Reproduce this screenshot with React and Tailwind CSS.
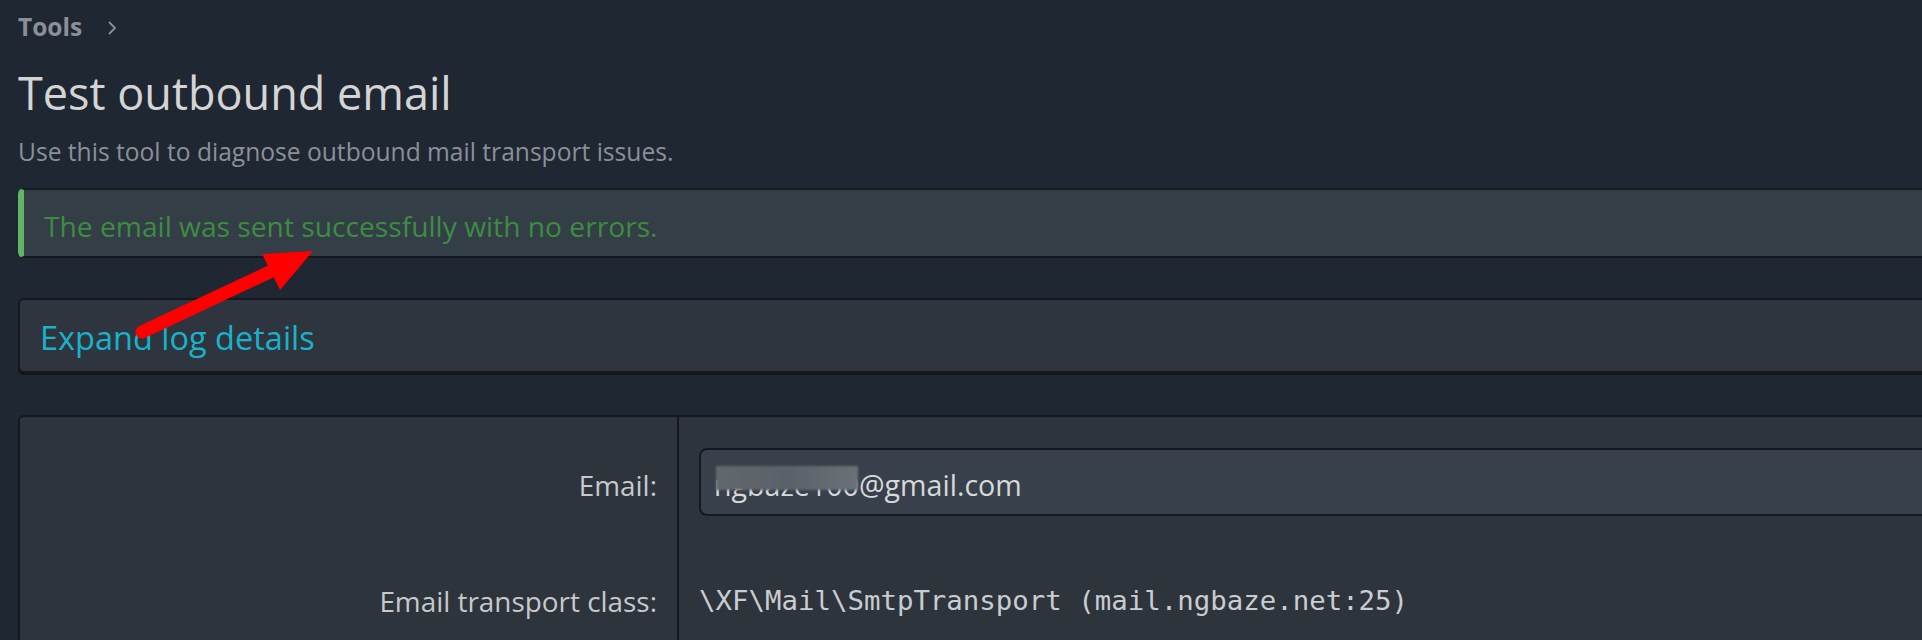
import React from "react";

export default function App() {
  return (
    <div className="relative w-[1922px] h-[640px] overflow-hidden bg-[#1f2733] font-['Open_Sans',sans-serif]">
      <div className="w-[2000px] pl-[18px]">
        {/* Breadcrumb */}
        <div className="pt-[12px] flex items-center gap-[24px] text-[#8c9096]">
          <span className="text-[24.5px] leading-[29px] font-bold">Tools</span>
          <svg width="12" height="16" viewBox="0 0 12 16" className="mt-[2px]">
            <path d="M3 2 L9 8 L3 14" fill="none" stroke="#8c9096" strokeWidth="1.8" />
          </svg>
        </div>

        {/* Title */}
        <h1 className="mt-[24px] text-[45px] leading-[56px] font-normal text-[#d4d4d4]">
          Test outbound email
        </h1>
        <p className="mt-[15px] text-[24.6px] leading-[32px] text-[#8b9097]">
          Use this tool to diagnose outbound mail transport issues.
        </p>

        {/* Success message */}
        <div className="mt-[20px] h-[70px] flex items-center rounded-[6px] border-2 border-[#15181d] border-l-[6px] border-l-[#62b564] bg-[#333e47] pl-[20px]">
          <span className="pt-[5px] text-[28.2px] leading-[38px] text-[#3d8c42]">
            The email was sent successfully with no errors.
          </span>
        </div>

        {/* Expand log */}
        <div className="mt-[40px] h-[75px] flex items-center rounded-[6px] border-2 border-[#15181d] bg-[#2f353e] pl-[20px] shadow-[0_2px_0_0_#131519]">
          <span className="pt-[5px] text-[32.5px] leading-[40px] text-[#19b2ca]">Expand log details</span>
        </div>

        {/* Form */}
        <div className="mt-[42px] rounded-[6px] border-2 border-[#15181d] bg-[#2e343c] flex h-[300px]">
          <div className="w-[659px] shrink-0 border-r-2 border-[#15181d] pt-[31px] pr-[20px] flex flex-col items-end text-[#c6c9cd]">
            <div className="h-[68px] flex items-center text-[27.9px] leading-[40px]">
              <span className="pt-[5px]">Email:</span>
            </div>
            <div className="mt-[65px] h-[40px] text-[27.9px] leading-[40px]">Email transport class:</div>
          </div>
          <div className="flex-1 pt-[31px] pl-[20px] flex flex-col">
            <div className="relative h-[68px] flex items-center rounded-[8px] border-2 border-[#16191e] bg-[#38414b] pl-[13px]">
              <span className="pt-[5px] text-[28.6px] leading-[40px] text-[#d6d8da]">ngbaze100@gmail.com</span>
              <div className="absolute left-[15px] top-[16px] w-[142px] h-[24px] bg-gradient-to-r from-[#63686d] via-[#5a6168] to-[#6a7177] blur-[1px]"></div>
            </div>
            <div className="mt-[65px] h-[40px] text-[27.4px] leading-[40px] text-[#c9ccd0] font-['DejaVu_Sans_Mono',monospace]">
              {"\\XF\\Mail\\SmtpTransport (mail.ngbaze.net:25)"}
            </div>
          </div>
        </div>
      </div>

      {/* Red annotation arrow */}
      <svg className="absolute left-0 top-0 pointer-events-none" width="1922" height="640">
        <line x1="142" y1="332" x2="276" y2="269" stroke="#ff0000" strokeWidth="13" strokeLinecap="round" />
        <polygon points="313,251 262,254 280,290" fill="#ff0000" />
      </svg>
    </div>
  );
}
